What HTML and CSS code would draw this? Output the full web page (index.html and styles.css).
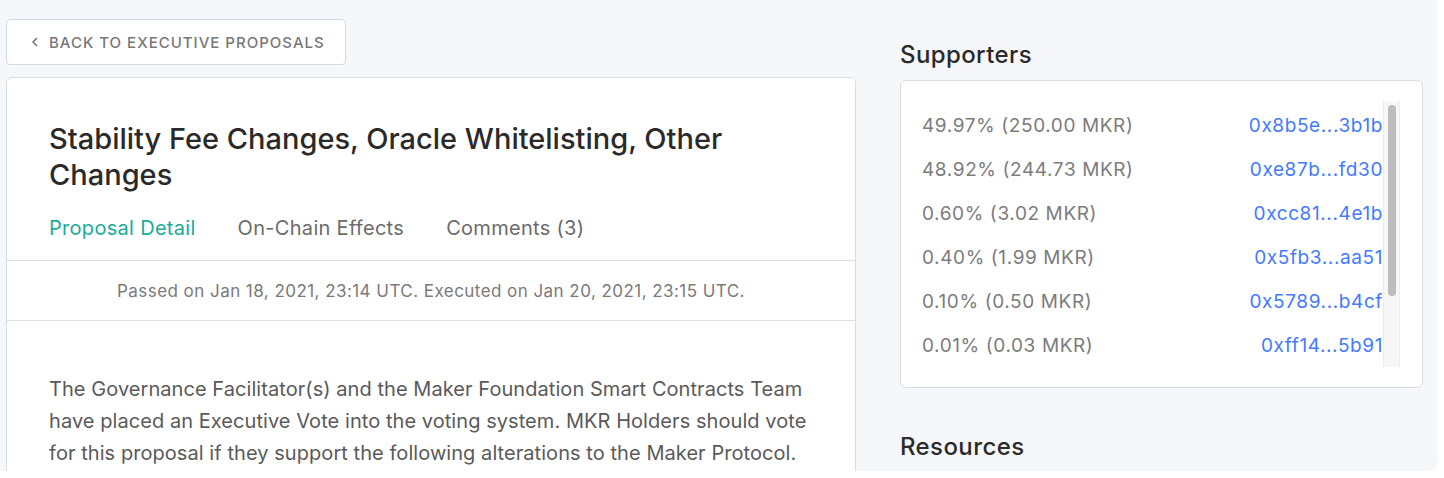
FILE: index.html
```html
<!DOCTYPE html>
<html lang="en">
<head>
<meta charset="utf-8">
<title>Executive Proposal</title>
<link rel="stylesheet" href="styles.css">
</head>
<body>
<div class="page">
  <div class="main-col">
    <button class="back-btn">
      <svg class="chev" width="8" height="10" viewBox="0 0 8 10"><path d="M5.5 1.5 L2 5 L5.5 8.5" fill="none" stroke="#777" stroke-width="1.6" stroke-linecap="round" stroke-linejoin="round"/></svg>
      <span>Back to Executive Proposals</span>
    </button>
    <div class="card proposal">
      <div class="proposal-head">
        <h1 class="title">Stability Fee Changes, Oracle Whitelisting, Other Changes</h1>
        <nav class="tabs">
          <span class="tab active">Proposal Detail</span>
          <span class="tab">On-Chain Effects</span>
          <span class="tab">Comments (3)</span>
        </nav>
      </div>
      <div class="status">Passed on Jan 18, 2021, 23:14 UTC. Executed on Jan 20, 2021, 23:15 UTC.</div>
      <div class="proposal-body">
        <p>The Governance Facilitator(s) and the Maker Foundation Smart Contracts Team have placed an Executive Vote into the voting system. MKR Holders should vote for this proposal if they support the following alterations to the Maker Protocol.</p>
      </div>
    </div>
  </div>
  <aside class="side-col">
    <h2 class="side-title">Supporters</h2>
    <div class="card supporters">
      <div class="sup-list">
        <div class="sup-row"><span class="pct">49.97% (250.00 MKR)</span><a class="addr">0x8b5e...3b1b</a></div>
        <div class="sup-row"><span class="pct">48.92% (244.73 MKR)</span><a class="addr">0xe87b...fd30</a></div>
        <div class="sup-row"><span class="pct">0.60% (3.02 MKR)</span><a class="addr">0xcc81...4e1b</a></div>
        <div class="sup-row"><span class="pct">0.40% (1.99 MKR)</span><a class="addr">0x5fb3...aa51</a></div>
        <div class="sup-row"><span class="pct">0.10% (0.50 MKR)</span><a class="addr">0x5789...b4cf</a></div>
        <div class="sup-row"><span class="pct">0.01% (0.03 MKR)</span><a class="addr">0xff14...5b91</a></div>
      </div>
      <div class="track"><div class="thumb"></div></div>
    </div>
    <h2 class="side-title resources">Resources</h2>
    <div class="card resources-card"></div>
  </aside>
</div>
</body>
</html>
```

FILE: styles.css
```css
html, body {
  margin: 0;
  padding: 0;
  background: #ffffff;
}

body {
  font-family: Inter, "Noto Sans", "Liberation Sans", sans-serif;
  -webkit-font-smoothing: antialiased;
}

.page {
  width: 1438px;
  height: 471px;
  box-sizing: border-box;
  background: #f5f7fa;
  border-bottom-right-radius: 10px;
  overflow: hidden;
  display: grid;
  grid-template-columns: 850px 523px;
  column-gap: 44px;
  align-items: start;
  padding: 19px 0 0 6px;
}

.card {
  background: #ffffff;
  border: 1px solid #d8dde3;
  border-radius: 6px;
  box-sizing: border-box;
}

.main-col {
  display: flex;
  flex-direction: column;
  align-items: flex-start;
  gap: 12px;
}

.back-btn {
  height: 46px;
  width: 340px;
  display: flex;
  align-items: center;
  gap: 10px;
  padding: 0 0 0 24px;
  background: #ffffff;
  border: 1px solid #d4d9e1;
  border-radius: 4px;
  font-family: inherit;
  font-size: 15px;
  font-weight: 500;
  letter-spacing: 1px;
  text-transform: uppercase;
  color: #777777;
  cursor: pointer;
}

.chev { flex: none; }

.proposal {
  width: 850px;
  height: 420px;
}

.proposal-head {
  padding: 43px 42px 0;
  border-bottom: 1px solid #dde1e6;
}

.title {
  margin: 0;
  font-size: 29px;
  line-height: 36px;
  font-weight: 500;
  color: #2a2a2b;
  width: 720px;
}

.tabs {
  display: flex;
  gap: 42px;
  margin-top: 23px;
  padding-bottom: 20px;
}

.tab {
  font-size: 20px;
  line-height: 24px;
  letter-spacing: 0.3px;
  color: #6b6b6b;
}

.tab.active { color: #1aab9b; }

.status {
  height: 59px;
  display: flex;
  align-items: center;
  justify-content: center;
  border-bottom: 1px solid #dde1e6;
  font-size: 17px;
  letter-spacing: 0.45px;
  color: #7a7a7a;
}

.proposal-body {
  padding: 52px 42px 0;
}

.proposal-body p {
  margin: 0;
  font-size: 20px;
  line-height: 32px;
  letter-spacing: 0.06px;
  color: #5a5a5a;
}

.side-col {
  display: flex;
  flex-direction: column;
}

.side-title {
  margin: 22px 0 0;
  font-size: 24px;
  line-height: 28px;
  font-weight: 500;
  letter-spacing: 0.4px;
  color: #2a2a2b;
}

.supporters {
  margin-top: 11px;
  height: 308px;
  padding: 20px 22px 20px 21px;
  display: flex;
}

.sup-list {
  flex: 1;
  height: 266px;
  overflow: hidden;
  padding-top: 2px;
  box-sizing: border-box;
}

.sup-row {
  height: 44px;
  display: flex;
  align-items: center;
  justify-content: space-between;
  font-size: 19px;
  letter-spacing: 0.6px;
}

.pct { color: #7c7c7c; }

.addr {
  color: #447afb;
  text-decoration: none;
  cursor: pointer;
}

.track {
  flex: none;
  width: 17px;
  height: 266px;
  box-sizing: border-box;
  background: #f7f7f7;
  border-left: 1px solid #ececec;
  border-right: 1px solid #ececec;
  padding: 4px 3px 0 4px;
}

.thumb {
  height: 191px;
  border-radius: 5px;
  background: #bdbdbd;
}

.side-title.resources {
  margin-top: 45px;
}

.resources-card {
  margin-top: 10px;
  height: 40px;
}
```
